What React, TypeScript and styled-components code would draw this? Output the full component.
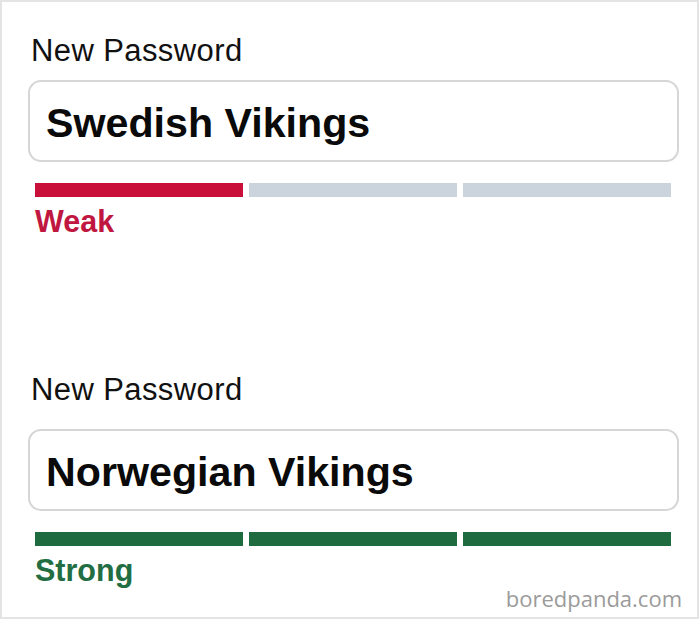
import React from "react";
import styled, { createGlobalStyle } from "styled-components";

const Global = createGlobalStyle`
  html, body { margin: 0; padding: 0; background: #fff; }
  body { font-family: "Liberation Sans", Arial, sans-serif; }
`;

const Frame = styled.div`
  position: relative;
  box-sizing: border-box;
  width: 699px;
  height: 619px;
  border: 2px solid #e4e4e4;
  background: #fff;
  padding: 33px 18px 0 26px;
  display: flex;
  flex-direction: column;
`;

const Section = styled.section<{ $top: number }>`
  display: flex;
  flex-direction: column;
  margin-top: ${(p) => p.$top}px;
`;

const Label = styled.div<{ $gap: number }>`
  font-size: 31px;
  line-height: 31px;
  letter-spacing: 0.4px;
  color: #111;
  margin-left: 3px;
  margin-bottom: ${(p) => p.$gap}px;
`;

const Field = styled.div`
  box-sizing: border-box;
  height: 82px;
  border: 2px solid #d6d6d6;
  border-radius: 13px;
  padding: 20px 16px 18px 16px;
  font-size: 41.2px;
  line-height: 42px;
  font-weight: 700;
  color: #0a0a0a;
`;

const Meter = styled.div`
  display: grid;
  grid-template-columns: repeat(3, 1fr);
  gap: 6px;
  margin: 21px 8px 0 7px;
`;

const Segment = styled.div<{ $color: string }>`
  height: 14px;
  background: ${(p) => p.$color};
`;

const Strength = styled.div<{ $color: string }>`
  margin: 9px 0 0 7px;
  font-size: 30.5px;
  line-height: 30px;
  font-weight: 700;
  color: ${(p) => p.$color};
`;

const Watermark = styled.div`
  position: absolute;
  right: 15px;
  bottom: 4px;
  font-family: "Open Sans", "DejaVu Sans", sans-serif;
  font-size: 22px;
  line-height: 30px;
  color: #9b9b9b;
`;

const GRAY = "#cbd3dc";

type Props = {
  top: number;
  gap: number;
  value: string;
  filled: number;
  color: string;
  textColor: string;
  label: string;
};

function PasswordBlock({ top, gap, value, filled, color, textColor, label }: Props) {
  return (
    <Section $top={top}>
      <Label $gap={gap}>New Password</Label>
      <Field>{value}</Field>
      <Meter>
        {[0, 1, 2].map((i) => (
          <Segment key={i} $color={i < filled ? color : GRAY} />
        ))}
      </Meter>
      <Strength $color={textColor}>{label}</Strength>
    </Section>
  );
}

export default function App() {
  return (
    <>
      <Global />
      <Frame>
        <PasswordBlock
          top={0}
          gap={14}
          value="Swedish Vikings"
          filled={1}
          color="#c8103a"
          textColor="#bf1740"
          label="Weak"
        />
        <PasswordBlock
          top={138}
          gap={24}
          value="Norwegian Vikings"
          filled={3}
          color="#1d6b3f"
          textColor="#226e42"
          label="Strong"
        />
        <Watermark>boredpanda.com</Watermark>
      </Frame>
    </>
  );
}
